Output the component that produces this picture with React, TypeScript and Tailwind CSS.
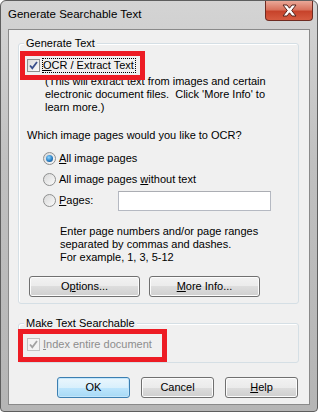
import React from 'react';

function CheckBox({ disabled }: { disabled?: boolean }) {
  return (
    <span
      className={`flex items-center justify-center w-[13px] h-[13px] shrink-0 border ${
        disabled ? 'border-[#c2c2c2] bg-[#f4f4f4]' : 'border-[#8e8f8f] bg-[linear-gradient(135deg,#dcdcdc,#fbfbfb)]'
      }`}
    >
      <svg width="11" height="11" viewBox="0 0 11 11">
        <path
          d="M2 5.5 L4.3 8.2 L9 2"
          fill="none"
          stroke={disabled ? '#a3a3a3' : '#3a4f8c'}
          strokeWidth="1.8"
        />
      </svg>
    </span>
  );
}

function Radio({ checked }: { checked?: boolean }) {
  return (
    <span className="flex items-center justify-center w-[13px] h-[13px] shrink-0 rounded-full border border-[#8e8f8f] bg-[linear-gradient(135deg,#d8d8d8,#fafafa)]">
      {checked && (
        <span className="w-[7px] h-[7px] rounded-full bg-[radial-gradient(circle_at_40%_35%,#8fd6ff,#2a7fc4_55%,#0e3f75)]" />
      )}
    </span>
  );
}

function WinButton({ children, primary, className }: { children: React.ReactNode; primary?: boolean; className?: string }) {
  return (
    <div
      className={`flex items-center justify-center h-[21px] rounded-[3px] border ${
        primary
          ? 'border-[#3c7fb1] bg-[linear-gradient(to_bottom,#eaf6fd_0%,#d9f0fc_50%,#bee6fd_50%,#a7d9f5_100%)] shadow-[inset_0_0_0_1px_#c3e6fb]'
          : 'border-[#707070] bg-[linear-gradient(to_bottom,#f2f2f2_0%,#ebebeb_50%,#dddddd_50%,#cfcfcf_100%)] shadow-[inset_0_0_0_1px_#fcfcfc]'
      } ${className ?? ''}`}
    >
      {children}
    </div>
  );
}

export default function App() {
  return (
    <div className="w-[318px] h-[412px] flex flex-col rounded-t-[6px] rounded-b-[4px] border border-[#5e5e5e] bg-[linear-gradient(to_bottom,#d4d4d4,#c0c0c0_40%,#b5b5b5)] font-['Liberation_Sans',Arial,sans-serif] text-[11px] text-black">
      {/* title bar */}
      <div className="h-[28px] flex items-start justify-between">
        <div className="h-[28px] flex items-center pl-[7px] text-[11.5px]">Generate Searchable Text</div>
        <div className="w-[48px] h-[20px] mr-[4px] flex items-center justify-center rounded-b-[4px] border border-t-0 border-[#6f2b21] bg-[linear-gradient(to_bottom,#eaa898_0%,#d9735e_45%,#c7432b_55%,#d65b40_100%)]">
          <svg width="17" height="13" viewBox="0 0 17 13">
            <path
              d="M2 1 H6 L8.5 4.2 L11 1 H15 L10.7 6.5 L15 12 H11 L8.5 8.8 L6 12 H2 L6.3 6.5 Z"
              fill="#fff"
              stroke="#55231b"
              strokeWidth="1"
              strokeLinejoin="round"
            />
          </svg>
        </div>
      </div>

      {/* client area */}
      <div className="flex-1 mx-[7px] mb-[6px] border border-[#8a8a8a] bg-[#f0f0f0] flex flex-col">
        {/* Generate Text group */}
        <div className="relative mt-[13px] ml-[9px] mr-[10px] border border-[#d5dfe5] rounded-[3px] shadow-[inset_1px_1px_0_#fff] pb-[6px]">
          <span className="absolute -top-[8px] left-[5px] px-[2px] bg-[#f0f0f0] leading-[14px]">Generate Text</span>

          <div className="mt-[14px] pl-[8px] flex items-center h-[15px]">
            <CheckBox />
            <span className="ml-[2px] h-[15px] flex items-center border border-dotted border-black pr-[1px]">
              <u>O</u>CR / Extract Text
            </span>
          </div>

          <div className="mt-[2px] pl-[26px] leading-[13px]">
            (This will extract text from images and certain
            <br />
            electronic document files.&nbsp; Click 'More Info' to
            <br />
            learn more.)
          </div>

          <div className="mt-[15px] pl-[8px] leading-[13px]">Which image pages would you like to OCR?</div>

          <div className="mt-[6px] pl-[24px] flex flex-col">
            <div className="h-[21px] flex items-center">
              <Radio checked />
              <span className="ml-[3px]">
                <u>A</u>ll image pages
              </span>
            </div>
            <div className="h-[21px] flex items-center">
              <Radio />
              <span className="ml-[3px]">
                All image pages <u>w</u>ithout text
              </span>
            </div>
            <div className="h-[21px] flex items-center">
              <Radio />
              <span className="ml-[3px] w-[59px]">
                <u>P</u>ages:
              </span>
              <div className="w-[153px] h-[20px] border border-[#b5b9c2] border-t-[#abadb3] bg-white" />
            </div>
          </div>

          <div className="mt-[14px] pl-[41px] leading-[13px]">
            Enter page numbers and/or page ranges
            <br />
            separated by commas and dashes.
            <br />
            For example, 1, 3, 5-12
          </div>

          <div className="mt-[12px] pl-[10px] flex gap-[9px]">
            <WinButton className="w-[111px]">
              O<u>p</u>tions...
            </WinButton>
            <WinButton className="w-[111px]">
              <u>M</u>ore Info...
            </WinButton>
          </div>

          {/* annotation */}
          <div className="absolute left-[1px] top-[7px] w-[125px] h-[29px] border-[5px] border-[#ed1c24]" />
        </div>

        {/* Make Text Searchable group */}
        <div className="relative mt-[19px] ml-[9px] mr-[10px] border border-[#d5dfe5] rounded-[3px] shadow-[inset_1px_1px_0_#fff] pb-[10px]">
          <span className="absolute -top-[8px] left-[5px] px-[2px] bg-[#f0f0f0] leading-[14px]">Make Text Searchable</span>
          <div className="mt-[13px] pl-[8px] flex items-center h-[15px]">
            <CheckBox disabled />
            <span className="ml-[3px] text-[#8d8d8d]">
              <u>I</u>ndex entire document
            </span>
          </div>
          <div className="absolute -left-[1px] top-[5px] w-[149px] h-[33px] border-[5px] border-[#ed1c24]" />
        </div>

        {/* dialog buttons */}
        <div className="mt-[14px] pr-[11px] flex justify-end gap-[11px]">
          <WinButton primary className="w-[73px]">
            OK
          </WinButton>
          <WinButton className="w-[73px]">Cancel</WinButton>
          <WinButton className="w-[73px]">
            <u>H</u>elp
          </WinButton>
        </div>
      </div>
    </div>
  );
}
